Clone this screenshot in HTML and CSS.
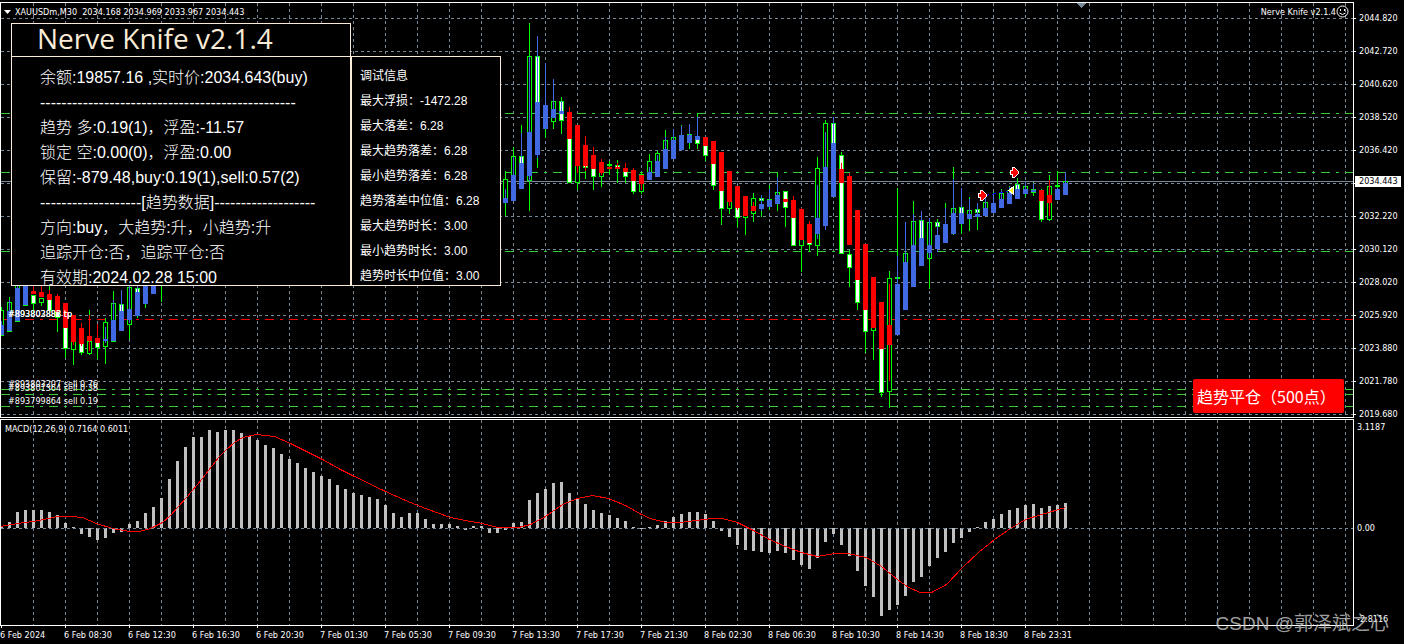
FILE: index.html
```
<!DOCTYPE html>
<html lang="zh-CN">
<head>
<meta charset="utf-8">
<title>XAUUSDm,M30</title>
<link rel="stylesheet" href="styles.css">
</head>
<body>
<main class="terminal">
  <section class="pane price-pane" aria-label="XAUUSDm M30">
    <svg class="plot price-plot" id="price-plot" aria-hidden="true"></svg>
    <header class="pane-head">
      <span class="symbol"><svg class="caret" viewBox="0 0 7 4"><path d="M0 0h7L3.5 4z"/></svg>XAUUSDm,M30&nbsp; 2034.168 2034.969 2033.967 2034.443</span>
      <span class="expert">Nerve Knife v2.1.4<svg class="smiley" viewBox="0 0 13 13"><circle cx="6.500" cy="6.500" r="5.500"/><path d="M4.500 4v2M8.500 4v2M3.500 8q3 3 6 0"/></svg></span>
    </header>
    <ul class="orders">
      <li class="order order-a">#893803883 tp</li>
      <li class="order order-a">#893802888 tp</li>
      <li class="order order-b">#893803207 sell 0.76</li>
      <li class="order order-c">#893801364 sell 0.38</li>
      <li class="order order-d">#893799864 sell 0.19</li>
    </ul>
    <div class="panels">
      <section class="panel info">
        <h1 class="info-title">Nerve Knife v2.1.4</h1>
        <div class="info-body">
          <p>余额:19857.16 ,实时价:2034.643(buy)</p>
          <p>------------------------------------------------</p>
          <p>趋势 多:0.19(1)，浮盈:-11.57</p>
          <p>锁定 空:0.00(0)，浮盈:0.00</p>
          <p>保留:-879.48,buy:0.19(1),sell:0.57(2)</p>
          <p>-------------------[趋势数据]-------------------</p>
          <p>方向:buy，大趋势:升，小趋势:升</p>
          <p>追踪开仓:否，追踪平仓:否</p>
          <p>有效期:2024.02.28 15:00</p>
        </div>
      </section>
      <section class="panel debug">
        <p>调试信息</p>
        <p>最大浮损：-1472.28</p>
        <p>最大落差：6.28</p>
        <p>最大趋势落差：6.28</p>
        <p>最小趋势落差：6.28</p>
        <p>趋势落差中位值：6.28</p>
        <p>最大趋势时长：3.00</p>
        <p>最小趋势时长：3.00</p>
        <p>趋势时长中位值：3.00</p>
      </section>
    </div>
    <button class="close-button" type="button">趋势平仓（500点）</button>
  </section>
  <aside class="scale">
    <ol class="price-scale">
      <li>2044.820</li><li>2042.720</li><li>2040.620</li><li>2038.520</li><li>2036.420</li>
      <li class="current"><span class="tag">2034.443</span></li>
      <li>2032.220</li><li>2030.120</li><li>2028.020</li><li>2025.920</li><li>2023.880</li><li>2021.780</li><li>2019.680</li>
    </ol>
  </aside>
  <section class="pane macd-pane" aria-label="MACD">
    <svg class="plot macd-plot" id="macd-plot" aria-hidden="true"></svg>
    <header class="pane-head macd-head">MACD(12,26,9) 0.7164 0.6011</header>
  </section>
  <aside class="scale macd-scale"><span>3.1187</span><span>0.00</span><span>-2.8116</span></aside>
  <ol class="time-scale">
    <li>6 Feb 2024</li><li>6 Feb 08:30</li><li>6 Feb 12:30</li><li>6 Feb 16:30</li><li>6 Feb 20:30</li><li>7 Feb 01:30</li><li>7 Feb 05:30</li><li>7 Feb 09:30</li><li>7 Feb 13:30</li><li>7 Feb 17:30</li><li>7 Feb 21:30</li><li>8 Feb 02:30</li><li>8 Feb 06:30</li><li>8 Feb 10:30</li><li>8 Feb 14:30</li><li>8 Feb 18:30</li><li>8 Feb 23:31</li>
  </ol>
  <p class="watermark">CSDN @郭泽斌之心</p>
</main>
<script src="chart.js"></script>
</body>
</html>
```
FILE: styles.css
```
* { box-sizing: border-box; margin: 0; padding: 0; }
body {
  background: #000;
  color: #fff;
  font-family: "DejaVu Sans Condensed", "Noto Sans", "Noto Sans CJK SC", sans-serif;
  font-size: 9px;
  line-height: 12px;
}
ol, ul { list-style: none; }
.terminal {
  position: relative;
  display: grid;
  grid-template-columns: minmax(0, 1fr) 50px;
  row-gap: 1px;
  padding-top: 2px;
  overflow: hidden;
}
.pane { position: relative; border: 1px solid #fff; }
.plot { display: block; width: 100%; shape-rendering: crispEdges; }
.price-plot { height: 414px; }
.macd-plot { height: 205px; }
.pane-head {
  position: absolute;
  top: 2px;
  left: 3px;
  right: 4px;
  display: flex;
  justify-content: space-between;
  white-space: nowrap;
}
.macd-head { top: 3px; left: 4px; }
.symbol, .expert { display: flex; align-items: center; }
.symbol { gap: 4px; }
.caret { width: 7px; height: 4px; fill: #fff; }
.smiley { width: 13px; height: 13px; fill: none; stroke: #fff; }
.orders { font-size: 9px; }
.order { position: absolute; left: 7px; white-space: nowrap; }
.order-a { top: 305px; }
.order-b { top: 375px; }
.order-c { top: 379px; }
.order-d { top: 392px; }

.panels { position: absolute; left: 10px; top: 20px; display: flex; align-items: flex-end; }
.panel { background: #000; border: 1px solid #faebd7; white-space: nowrap; }
.info { width: 340px; height: 263px; }
.info-title {
  height: 33px;
  padding-left: 25px;
  border-bottom: 1px solid #faebd7;
  color: #faebd7;
  font: 400 28px/28px "Open Sans", "Noto Sans", sans-serif;
}
.info-body {
  padding: 8px 0 0 28px;
  font: 16px/25px "Liberation Sans", "Noto Sans CJK SC", sans-serif;
  font-weight: 300;
}
.debug {
  width: 150px;
  height: 230px;
  padding: 6px 0 0 8px;
  font: 12px/26px "Liberation Sans", "Noto Sans CJK SC", sans-serif;
}
.info-body p, .debug p { height: 25px; }
.close-button {
  position: absolute;
  right: 9px;
  bottom: 4px;
  width: 151px;
  height: 34px;
  padding-left: 4px;
  border: 0;
  border-radius: 2px;
  background: #f00;
  color: #fff;
  font: 16px/34px "Noto Sans CJK SC", sans-serif;
  text-align: left;
  white-space: nowrap;
}

.price-scale { display: grid; grid-template-rows: repeat(12, 33px) 18px; line-height: 33px; }
.price-scale li { display: flex; align-items: flex-start; }
.price-scale li::before { content: ""; width: 2px; height: 1px; margin: 16px 3px 0 0; background: #fff; }
.price-scale .current::before { margin-right: 0; }
.current { position: relative; }
.tag {
  position: absolute;
  left: 1px;
  top: 9px;
  width: 46px;
  padding-left: 4px;
  background: #fff;
  color: #000;
  line-height: 11px;
}
.macd-scale { display: grid; grid-template-rows: 101px 1fr auto; padding: 2px 0 1px 3px; }
.time-scale { display: flex; grid-column: 1 / -1; margin-top: -1px; overflow: hidden; }
.time-scale li { flex: 0 0 64px; white-space: nowrap; line-height: 14px; }
.time-scale li::before { content: ""; display: block; width: 1px; height: 2px; margin-left: 1px; background: #fff; }
.watermark {
  position: absolute;
  right: 15px;
  bottom: 4px;
  color: rgba(200, 200, 200, 0.8);
  font: 19px/28px "Liberation Sans", "Noto Sans CJK SC", sans-serif;
  white-space: nowrap;
}

.grid { stroke: #778899; stroke-dasharray: 3 3; }
.bid { stroke: #778899; }
.level { stroke: #32cd32; stroke-dasharray: 9 6 3 6; }
.level-stop { stroke: #f00; }
.wick { fill: #0f0; }
.bull { fill: #000; stroke: #0f0; }
.bear { fill: #fff; stroke: #0f0; }
.up { fill: #4169e1; }
.down { fill: #f00; }
.bar { fill: #c0c0c0; }
.signal { fill: none; stroke: #f00; }
.shift { fill: #778899; }
.trade { stroke: #00f; stroke-dasharray: 4 3; }
.sell-mark { fill: #f00; stroke: #fff; }
.exit-mark { fill: #ff0; stroke: #fff; }
```
FILE: chart.js
```
const NS = 'http://www.w3.org/2000/svg';
function add(parent, tag, attrs) {
  const el = document.createElementNS(NS, tag);
  for (const key in attrs) el.setAttribute(key, attrs[key]);
  parent.appendChild(el);
  return el;
}
const barX = k => 1 + 8 * k;

function verticals(svg) {
  for (let x = 32; x < 2600; x += 32) {
    add(svg, 'line', { class: 'grid', x1: x + 0.5, x2: x + 0.5, y1: 0, y2: '100%' });
  }
}
function horizontal(svg, cls, y) {
  add(svg, 'line', { class: cls, x1: 0, x2: '100%', y1: y + 0.5, y2: y + 0.5 });
}

// index, high, body top, body bottom, low, b = hollow / w = filled,
// then the smoothed candle: u/d, high, top, bottom, low
const candles = `
0 307 310 335 335 b u 321 325 335 335
1 297 302 331 331 b u 300 311 331 331
2 270 280 321 321 b u 270 288 321 321
3 270 280 305 305 b u 270 280 305 305
4 295 295 303 314 w d 286 291 294 294
5 298 298 302 306 b d 284 292 297 297
6 286 294 310 313 w d 290 294 300 300
7 296 296 317 332 w d 294 296 312 312
8 303 303 348 358 w d 303 303 328 328
9 320 320 349 365 b d 315 315 342 345
10 328 328 352 355 w d 323 328 344 346
11 310 341 353 355 b d 315 336 341 351
12 338 338 347 359 w d 324 338 343 343
13 318 322 346 364 b u 327 339 341 343
14 291 303 341 342 b u 300 320 341 341
15 304 304 330 331 w u 290 311 331 331
16 275 287 324 339 b u 275 309 320 323
17 280 288 315 318 w u 280 292 316 316
18 270 280 303 308 b u 270 280 304 304
19 270 280 293 294 b u 270 280 294 294
20 270 280 283 302 b u 270 275 283 283
62 185 190 211 224 b d 190 193 211 211
63 171 179 202 216 b u 189 198 203 203
64 147 156 200 200 b u 157 175 201 201
65 125 156 187 188 w u 133 163 189 189
66 23 56 180 211 b u 57 132 176 181
67 56 56 154 168 w u 36 102 155 158
68 105 105 127 138 b u 63 105 129 129
69 101 101 121 129 b u 79 109 118 118
70 97 101 120 134 w u 101 111 114 114
71 112 112 182 183 w d 107 112 139 139
72 125 125 182 190 b d 125 125 166 173
73 145 145 167 179 w d 136 145 166 171
74 155 155 176 190 w d 147 155 169 169
75 162 162 176 187 b d 159 162 173 175
76 161 164 165 175 b d 167 167 169 169
77 160 165 167 183 w d 163 167 169 169
78 168 168 176 183 w d 163 168 172 172
79 170 170 191 194 w d 168 170 181 181
80 172 174 191 194 b d 175 175 184 190
81 154 161 179 180 b u 167 172 180 180
82 151 153 176 177 b u 155 161 177 177
83 130 140 168 169 b u 137 149 169 169
84 137 137 158 159 b u 129 140 159 159
85 125 135 149 150 b u 126 135 150 150
86 134 134 142 149 b u 124 135 143 143
87 113 136 143 149 w u 117 136 140 140
88 137 137 155 161 w d 137 137 146 146
89 141 141 185 190 w d 141 141 164 164
90 152 152 208 225 w d 152 152 191 191
91 171 171 208 214 b d 171 171 202 206
92 186 186 217 227 w d 186 186 208 210
93 196 196 217 235 b d 196 196 216 216
94 193 198 213 222 b d 202 206 211 211
95 198 198 200 217 w u 195 204 209 211
96 185 199 206 210 b u 189 200 207 207
97 173 192 203 211 b u 177 195 204 204
98 191 191 207 227 w d 199 199 202 202
99 200 200 245 246 w d 196 200 218 218
100 209 209 245 272 b d 208 209 240 240
101 224 224 244 252 w d 221 224 243 243
102 157 168 245 256 b u 185 218 234 239
103 120 123 225 226 b u 132 167 226 230
104 123 123 196 197 w u 117 143 197 197
105 152 155 253 254 w d 163 169 183 183
106 250 254 267 287 w d 173 176 245 245
107 210 210 302 310 w d 210 210 280 280
108 244 244 331 353 w d 244 244 310 310
109 277 277 330 360 b d 277 277 328 328
110 302 302 392 397 w d 302 302 349 349
111 271 278 391 408 b d 284 325 345 381
112 188 277 278 284 b u 256 284 335 335
113 253 253 309 310 b u 222 262 310 310
114 201 221 286 287 b u 214 245 287 287
115 220 220 265 266 w u 211 238 266 266
116 222 222 258 289 b u 218 245 253 258
117 219 222 226 230 w u 222 235 249 252
118 203 224 242 243 b u 208 224 243 243
119 167 208 233 235 b u 179 213 234 234
120 207 207 223 234 w u 188 213 224 224
121 197 210 218 231 b u 199 214 219 219
122 209 209 212 230 w u 203 214 217 217
123 196 202 215 216 b u 197 208 216 216
124 192 203 212 213 b u 193 203 213 213
125 189 193 207 208 b u 190 199 208 208
126 186 190 203 204 b u 187 193 204 204
127 178 184 198 199 w u 184 189 199 199
128 186 186 193 197 b u 182 189 194 194
129 182 189 192 196 b u 183 190 192 192
130 189 190 219 222 w d 190 190 201 201
131 175 186 219 221 b d 180 195 203 216
132 171 185 186 189 b u 188 189 200 200
133 181 181 194 195 b u 172 183 195 195`;

const price = document.getElementById('price-plot');
verticals(price);
for (let y = 15; y < 414; y += 33) horizontal(price, 'grid', y);
[110, 169, 248, 386, 391, 403].forEach(y => horizontal(price, 'level', y));
horizontal(price, 'level level-stop', 316);
horizontal(price, 'bid', 178);

const plot = add(price, 'g', { transform: 'translate(-1 -3)' });
for (const row of candles.trim().split('\n')) {
  const [k, hi, top, bottom, lo, kind, dir, h2, t2, b2, l2] = row.split(' ');
  const x = barX(+k);
  add(plot, 'rect', { class: 'wick', x, y: hi, width: 1, height: lo - hi });
  add(plot, 'rect', { class: kind === 'w' ? 'bear' : 'bull', x: x - 1.5, y: +top + 0.5, width: 4, height: bottom - top });
  const cls = dir === 'u' ? 'up' : 'down';
  add(plot, 'rect', { class: cls, x, y: h2, width: 1, height: l2 - h2 });
  add(plot, 'rect', { class: cls, x: x - 2, y: t2, width: 5, height: b2 - t2 });
}
add(plot, 'path', { class: 'trade', d: 'M985 195.500L1011 190.500' });
for (const [x, y] of [[982, 195], [1014, 172]]) {
  add(plot, 'path', { class: 'sell-mark', d: `M${x - 3.5} ${y - 1.5}h2v-3h2l4 4v2l-4 4h-2v-3h-2z` });
}
add(plot, 'path', { class: 'exit-mark', d: 'M1013.500 186.500v8l-5-4z' });
add(plot, 'path', { class: 'shift', d: 'M1076 3h10l-5 5z' });

const histogram = [526,522,512,510,510,510,512,515,523,527,534,537,540,538,533,532,524,521,513,507,498,479,461,447,437,437,430,432,430,430,433,436,440,445,448,454,459,463,468,472,476,479,485,489,493,495,497,499,505,513,517,513,513,519,524,524,524,526,530,526,526,533,533,530,523,522,500,493,489,483,482,493,499,504,510,513,515,518,521,527,529,527,525,521,517,514,512,512,514,521,531,537,545,550,551,552,553,551,553,560,565,569,558,542,534,545,556,571,586,597,616,610,605,596,582,577,566,558,552,543,538,532,527,522,519,514,510,508,505,504,508,506,505,503];
const signal = '0,526 17,523 33,521 48,518 57,516 70,516 82,517 96,523 112,528 129,531 139,531 150,528 162,522 170,515 186,497 202,478 218,457 226,449 234,442 242,437 256,434 274,436 290,443 306,451 322,459 340,469 350,474 385,491 405,500 425,508 450,517 470,521 482,523 497,527 518,527 530,524 545,516 562,504 577,498 592,495 608,498 625,505 641,514 650,518 665,522 680,522 695,520 712,518 722,518 737,522 753,530 769,539 785,546 801,552 817,556 835,553 847,553 866,557 881,566 897,579 908,587 920,592 931,592 946,584 962,567 978,552 994,539 1010,528 1025,519 1041,514 1065,507';

const macd = document.getElementById('macd-plot');
verticals(macd);
const study = add(macd, 'g', { transform: 'translate(-1 -420)' });
histogram.forEach((y, k) => {
  const top = Math.min(y, 528);
  add(study, 'rect', { class: 'bar', x: barX(k) - 1, y: top, width: 3, height: Math.max(y, 528) - top });
});
horizontal(macd, 'grid', 108);
add(study, 'polyline', { class: 'signal', points: signal, transform: 'translate(0.5 0.5)' });
```
